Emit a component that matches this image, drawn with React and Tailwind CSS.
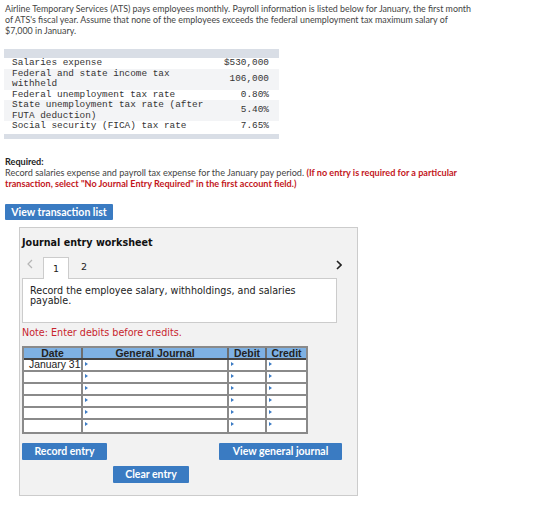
import React from "react";

const rows = [
  { label: ["Salaries expense"], value: "$530,000", shade: false },
  { label: ["Federal and state income tax", "withheld"], value: "106,000", shade: true },
  { label: ["Federal unemployment tax rate"], value: "0.80%", shade: false },
  { label: ["State unemployment tax rate (after", "FUTA deduction)"], value: "5.40%", shade: true },
  { label: ["Social security (FICA) tax rate"], value: "7.65%", shade: false },
];

function Marker() {
  return <span className="absolute left-[2px] top-[2px] w-0 h-0 border-t-[2px] border-b-[2px] border-l-[3px] border-t-transparent border-b-transparent border-l-[#3b7bc4]"></span>;
}

function Btn({ children, className }) {
  return (
    <div className={`h-[17px] bg-[#3a7bc2] text-white font-bold text-[10.5px] leading-[17px] text-center rounded-[1px] ${className}`} style={{ fontFamily: "Lato, sans-serif" }}>
      {children}
    </div>
  );
}

export default function App() {
  const jrows = [0, 1, 2, 3, 4, 5];
  return (
    <div className="w-[560px] h-[531px] bg-white text-[#333]" style={{ fontFamily: "Lato, 'Open Sans', sans-serif" }}>
      <div className="pl-[5px] pt-[3px] text-[8.9px] leading-[11px] text-[#444]">
        Airline Temporary Services (ATS) pays employees monthly. Payroll information is listed below for January, the first month
        <br />
        of ATS's fiscal year. Assume that none of the employees exceeds the federal unemployment tax maximum salary of
        <br />
        $7,000 in January.
      </div>

      <div className="ml-[4px] mt-[13px] w-[275px]" style={{ fontFamily: "'Liberation Mono', monospace" }}>
        <div className="h-[9px] bg-[#d9dee6]"></div>
        {rows.map((r, i) => (
          <div key={i} className={`flex items-center pl-[8px] pr-[10px] text-[9.4px] leading-[10.5px] text-[#333] ${r.shade ? "bg-[#f3f4f6]" : "bg-white"}`}>
            <div className="flex-1">
              {r.label.map((l, j) => (
                <div key={j}>{l}</div>
              ))}
            </div>
            <div className="text-right">{r.value}</div>
          </div>
        ))}
        <div className="h-[5px] mt-[2px] bg-[#d9dee6]"></div>
      </div>

      <div className="pl-[5px] mt-[17px] text-[9.1px] leading-[11px] text-[#444]">
        <div className="font-bold text-[#222]">Required:</div>
        <div>
          Record salaries expense and payroll tax expense for the January pay period.{" "}
          <span className="font-bold text-[#c3161c]">
            (If no entry is required for a particular
            <br />
            transaction, select "No Journal Entry Required" in the first account field.)
          </span>
        </div>
      </div>

      <div className="ml-[5px] mt-[15px] w-[108px] h-[16px] bg-[#3a7bc2] text-white font-bold text-[10.5px] leading-[16px] text-center rounded-[1px]">
        View transaction list
      </div>

      <div className="ml-[19px] mt-[7px] w-[339px] h-[269px] bg-[#f2f2f2] border border-[#cccccc] pl-[2px]" style={{ fontFamily: "'DejaVu Sans', Verdana, sans-serif" }}>
        <div className="pt-[8px] text-[9.6px] font-bold text-[#111] leading-[14px]">Journal entry worksheet</div>

        <div className="flex items-end mt-[6px] h-[22px] w-[320px]">
          <svg width="6" height="10" viewBox="0 0 6 10" className="ml-[5px] mb-[9px]">
            <path d="M5 1 L1 5 L5 9" fill="none" stroke="#b5b5b5" strokeWidth="1.2" />
          </svg>
          <div className="ml-[10px] w-[26px] h-[22px] bg-white border border-b-0 border-[#cccccc] text-center text-[9.5px] leading-[22px] text-[#222] relative z-10 -mb-[1px]">1</div>
          <div className="ml-[12px] h-[22px] text-[9.5px] leading-[22px] text-[#222]">2</div>
          <div className="flex-1"></div>
          <svg width="6" height="10" viewBox="0 0 6 10" className="mb-[8px]">
            <path d="M1 1 L5 5 L1 9" fill="none" stroke="#222" strokeWidth="1.6" />
          </svg>
        </div>

        <div className="w-[315px] h-[45px] bg-white border border-[#cccccc] px-[7px] pt-[7px] text-[9.6px] leading-[10px] text-[#222]">
          Record the employee salary, withholdings, and salaries payable.
        </div>
        <div className="mt-[4px] text-[9.6px] leading-[12px] text-[#c8242d]">Note: Enter debits before credits.</div>

        <div className="mt-[7px] w-[286px] border-[2px] border-[#8a8a8a] bg-white" style={{ fontFamily: "'Liberation Sans', Arial, sans-serif" }}>
          <div className="flex h-[12px] bg-[#7eb1e3] border-b-[2px] border-[#444] text-[10.4px] font-bold text-[#222] leading-[11px]">
            <div className="w-[59px] text-center border-r-[2px] border-[#6d6d6d]">Date</div>
            <div className="w-[146px] text-center border-r-[2px] border-[#6d6d6d]">General Journal</div>
            <div className="w-[38px] text-center border-r-[2px] border-[#6d6d6d]">Debit</div>
            <div className="flex-1 text-center">Credit</div>
          </div>
          {jrows.map((i) => (
            <div key={i} className={`flex h-[12px] ${i < 5 ? "border-b-[2px] border-[#8a8a8a]" : ""}`}>
              <div className="w-[59px] border-r-[2px] border-[#8a8a8a] text-[10.4px] leading-[10px] pl-[5px] text-[#222]">{i === 0 ? "January 31" : ""}</div>
              <div className="w-[146px] border-r-[2px] border-[#8a8a8a] relative"><Marker /></div>
              <div className="w-[38px] border-r-[2px] border-[#8a8a8a] relative"><Marker /></div>
              <div className="flex-1 relative"><Marker /></div>
            </div>
          ))}
        </div>

        <div className="mt-[9px] flex w-[320px] justify-between">
          <Btn className="w-[85px]">Record entry</Btn>
          <Btn className="w-[123px]">View general journal</Btn>
        </div>
        <Btn className="ml-[91px] mt-[6px] w-[76px]">Clear entry</Btn>
      </div>
    </div>
  );
}
